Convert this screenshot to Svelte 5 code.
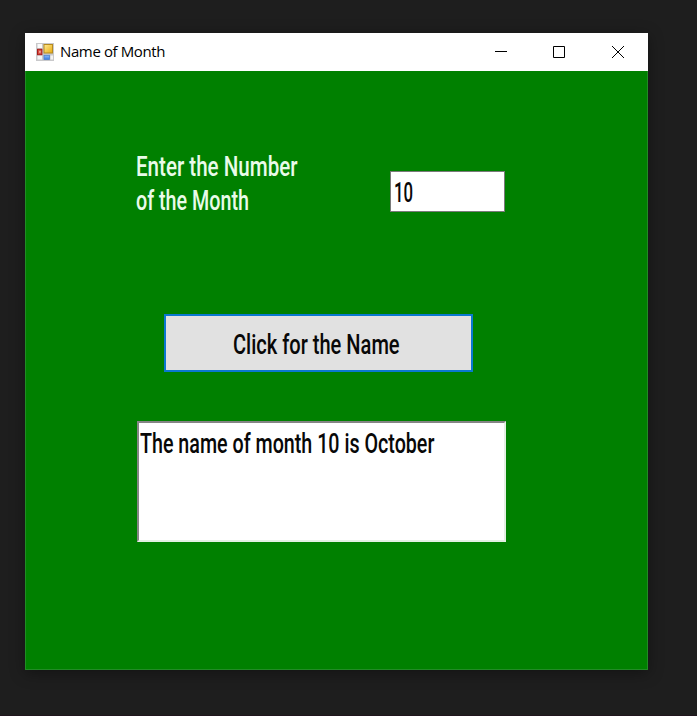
<script>
  let month = $state('10');
  const result = 'The name of month 10 is October';
</script>

<div class="desktop">
  <main class="window">
    <header>
      <svg class="app" width="18" height="18" viewBox="0 0 18 18">
        <defs>
          <linearGradient id="y" x1="0" y1="0" x2="1" y2="1"><stop stop-color="#ffeb94" /><stop offset="1" stop-color="#e8ab10" /></linearGradient>
          <linearGradient id="b" x1="0" y1="0" x2="0" y2="1"><stop stop-color="#8dbdfb" /><stop offset="1" stop-color="#3978e0" /></linearGradient>
        </defs>
        <rect width="18" height="18" fill="#c9c9cb" />
        <rect x="1.5" y="1" width="4.5" height="4" fill="#fafafa" />
        <rect x="1.5" y="12.5" width="4.5" height="4" fill="#f4f4f4" />
        <rect x="14.5" y="12.5" width="2.5" height="4" fill="#f4f4f4" />
        <rect x="1.5" y="6.3" width="4.4" height="5.4" fill="#d74b42" stroke="#a81c18" />
        <rect x="3" y="7.8" width="1.8" height="2" fill="#f3a096" />
        <rect x="8" y="1.5" width="8.5" height="8.5" fill="url(#y)" stroke="#b58a20" />
        <rect x="8" y="12.3" width="5.5" height="4.2" fill="url(#b)" stroke="#4c80ce" stroke-width=".8" />
      </svg>
      <span class="title">Name of Month</span>
      <svg class="controls" width="130" height="14" viewBox="0 0 130 14" fill="none" stroke="#000">
        <path d="M1 6.5h12" />
        <path d="M59.500 1.500h11v11h-11z" />
        <path d="M118 1l12 12M130 1l-12 12" />
      </svg>
    </header>
    <section class="form">
      <div class="row">
        <label for="month"><span class="din l1">Enter the Number</span><span class="din l2">of the Month</span></label>
        <div class="field"><input id="month" class="din" bind:value={month} /></div>
      </div>
      <button><span class="din">Click for the Name</span></button>
      <div class="output"><span class="din">{result}</span></div>
    </section>
  </main>
</div>

<style>
  .desktop {
    box-sizing: border-box;
    width: 697px;
    height: 716px;
    padding: 33px 0 0 25px;
    overflow: hidden;
    background: #1e1e1e;
    border-bottom: 1px solid #20151d;
  }
  .window {
    width: 623px;
    height: 637px;
    box-shadow: 0 3px 14px rgba(0, 0, 0, .38);
  }
  header {
    box-sizing: border-box;
    display: flex;
    align-items: center;
    height: 38px;
    padding: 0 24px 0 11px;
    background: #fff;
  }
  .title {
    margin: 0 0 2px 6px;
    font: 15px/20px "Open Sans", sans-serif;
    letter-spacing: -.38px;
    color: #000;
  }
  .controls { margin-left: auto; overflow: visible; }
  .form {
    box-sizing: border-box;
    height: 599px;
    padding: 79px 0 0 111px;
    border: 1px solid #228b26;
    border-top: 0;
    background: #008000;
  }
  .din {
    display: block;
    width: max-content;
    font: 500 27px/34px Roboto, sans-serif;
    white-space: nowrap;
    color: #080808;
    transform: scaleX(var(--condense));
    transform-origin: 0 0;
  }
  .row { display: flex; height: 164px; }
  label { width: 253px; margin-left: -1px; margin-right: 1px; }
  label .din { color: #e9fbe9; }
  .l1 { --condense: .762; }
  .l2 { --condense: .73; }
  .field {
    box-sizing: border-box;
    width: 115px;
    height: 41px;
    margin-top: 21px;
    padding: 4px 0 0 3px;
    overflow: hidden;
    border: 1px solid #7a7a7a;
    background: #fff;
  }
  input.din {
    --condense: .62;
    width: 160px;
    height: 34px;
    padding: 0;
    border: 0;
    outline: 0;
    background: transparent;
  }
  button {
    --condense: .743;
    box-sizing: border-box;
    display: block;
    width: 309px;
    height: 58px;
    margin: 0 0 0 27px;
    padding: 3px 0 0 67px;
    border: 2px solid #0b78d0;
    border-radius: 0;
    background: #e1e1e1;
  }
  .output {
    --condense: .729;
    box-sizing: border-box;
    width: 369px;
    height: 121px;
    margin-top: 49px;
    padding: 4px 0 0 1px;
    border: 2px solid;
    border-color: #858585 #e3efe3 #e3efe3 #858585;
    background: #fff;
  }
</style>
